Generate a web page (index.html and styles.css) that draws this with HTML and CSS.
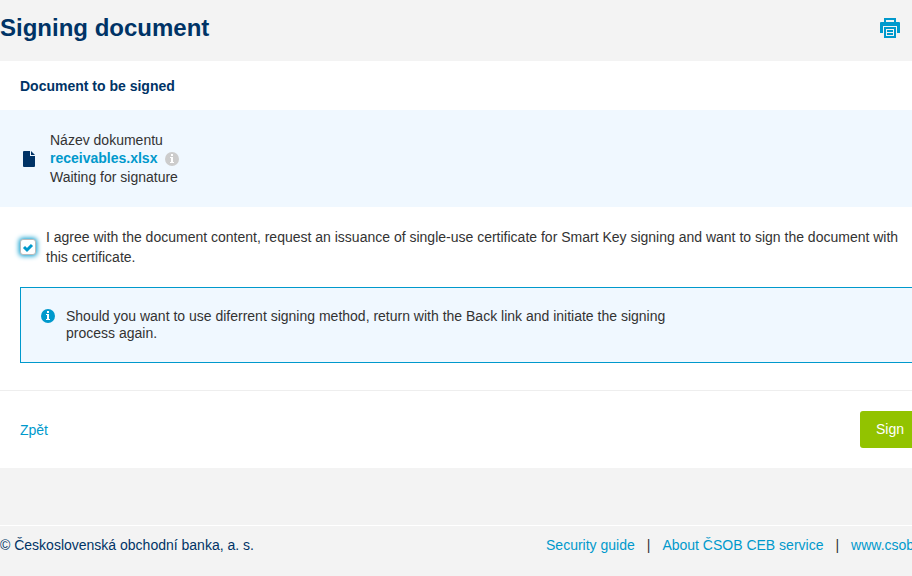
FILE: index.html
```html
<!DOCTYPE html>
<html lang="en">
  <head>
    <meta charset="UTF-8" />
    <meta name="viewport" content="width=device-width, initial-scale=1.0" />
    <title>Signing document</title>
    <link rel="stylesheet" href="styles.css">
  </head>
  <body>
    <div class="page">
      <header class="page-header">
        <h1>Signing document</h1>
        <button type="button" class="print" aria-label="Print">
          <svg width="20" height="20" viewBox="0 0 20 20" aria-hidden="true">
            <path fill="#0099cc" d="M4 0h12v4h-2V2H6v2H4z" />
            <path fill="#0099cc" d="M1 4h18a1 1 0 0 1 1 1v10h-3V8H3v7H0V5a1 1 0 0 1 1-1z" />
            <path fill="#0099cc" fill-rule="evenodd" d="M4 9h12v11H4zM6 11v7h8v-7z" />
            <path fill="#0099cc" d="M7 12h6v2H7zM7 15h6v2H7z" />
          </svg>
        </button>
      </header>

      <main class="card">
        <h2>Document to be signed</h2>

        <section class="document">
          <svg class="file-icon" width="12" height="16" viewBox="0 0 12 16" aria-hidden="true">
            <path fill="#003366" d="M1 0h6v5h5v10a1 1 0 0 1-1 1H1a1 1 0 0 1-1-1V1a1 1 0 0 1 1-1zM8 0l4 4H8z" />
          </svg>
          <div>
            <div>Název dokumentu</div>
            <div class="file-name">
              <a href="#">receivables.xlsx</a>
              <svg width="14" height="14" viewBox="0 0 14 14" aria-hidden="true">
                <circle cx="7" cy="7" r="7" fill="#cccccc" />
                <path fill="#fff" d="M6 2h2v2H6zM5 5h3v5h1v1H5v-1h1V6H5z" />
              </svg>
            </div>
            <div>Waiting for signature</div>
          </div>
        </section>

        <div class="agreement">
          <input type="checkbox" id="agree" checked />
          <label for="agree">I agree with the document content, request an issuance of single-use certificate for Smart Key signing and want to sign the document with this certificate.</label>
        </div>

        <div class="notice">
          <svg width="14" height="14" viewBox="0 0 14 14" aria-hidden="true">
            <circle cx="7" cy="7" r="7" fill="#0099cc" />
            <path fill="#fff" d="M6 2h2v2H6zM5 5h3v5h1v1H5v-1h1V6H5z" />
          </svg>
          <p>Should you want to use diferrent signing method, return with the Back link and initiate the signing process again.</p>
        </div>

        <div class="actions">
          <a href="#">Zpět</a>
          <button type="button" class="sign">Sign</button>
        </div>
      </main>

      <footer class="page-footer">
        <span>© Československá obchodní banka, a. s.</span>
        <nav class="footer-links">
          <a href="#">Security guide</a>
          <span>|</span>
          <a href="#">About ČSOB CEB service</a>
          <span>|</span>
          <a href="#">www.csob.cz</a>
        </nav>
      </footer>
    </div>
  </body>
</html>
```

FILE: styles.css
```css
* {
  box-sizing: border-box;
}
body {
  margin: 0;
  overflow: hidden;
  background-color: #f3f3f3;
  color: #333;
  font-family: Arial, "Liberation Sans", sans-serif;
  font-size: 14px;
  line-height: 18px;
}
a {
  color: #0099cc;
  text-decoration: none;
}
h1,
h2,
p {
  margin: 0;
}
h1,
h2 {
  color: #003366;
}
svg {
  display: block;
  flex: none;
}
/* the layout runs a little past the right edge of the window */
.page {
  margin-right: -28px;
}
.page-header {
  display: flex;
  justify-content: space-between;
  align-items: center;
  padding: 12px 40px 17px 0;
}
h1 {
  font-size: 24px;
  line-height: 32px;
}
.print {
  padding: 0;
  border: none;
  background: none;
  cursor: pointer;
}
.card {
  background-color: #fff;
}
h2 {
  padding: 16px 20px 15px;
  font-size: 14px;
  line-height: 18px;
}
.document {
  display: flex;
  align-items: center;
  gap: 15px;
  padding: 21px 23px;
  background-color: #f0f8ff;
}
.file-name {
  display: flex;
  align-items: center;
  gap: 8px;
  line-height: 19px;
  font-weight: bold;
}
.agreement {
  display: flex;
  align-items: center;
  gap: 10px;
  padding: 20px 20px;
  line-height: 20px;
}
.agreement input {
  appearance: none;
  flex: none;
  width: 16px;
  height: 16px;
  margin: 0;
  border: 1px solid #bbb;
  border-radius: 3px;
  background: #fff url("data:image/svg+xml,%3Csvg xmlns='http://www.w3.org/2000/svg' viewBox='0 0 14 14'%3E%3Cpath d='M3 7l3 3 5-5' fill='none' stroke='%230099cc' stroke-width='3'/%3E%3C/svg%3E") center / 14px 14px;
  box-shadow: 0 0 5px 1px #0099cc;
}
.notice {
  display: flex;
  gap: 11px;
  margin: 0 20px 27px;
  padding: 20px 20px;
  border: 1px solid #0099cc;
  background-color: #f0f8ff;
  line-height: 17px;
}
.notice svg {
  margin-top: 1px;
}
.notice p {
  max-width: 620px;
}
.actions {
  display: flex;
  justify-content: space-between;
  align-items: center;
  padding: 20px;
  border-top: 1px solid #eee;
}
.sign {
  padding: 10px 16px;
  border: none;
  border-radius: 3px;
  background-color: #92c300;
  color: #fff;
  font: inherit;
  line-height: 17px;
  cursor: pointer;
}
.sign:hover {
  background-color: #82ae00;
}
.page-footer {
  display: flex;
  justify-content: space-between;
  margin-top: 57px;
  padding-top: 10px;
  border-top: 1px solid #fff;
  color: #003366;
}
.footer-links {
  display: flex;
  gap: 12px;
  padding-right: 8px;
  color: #333;
}
```
